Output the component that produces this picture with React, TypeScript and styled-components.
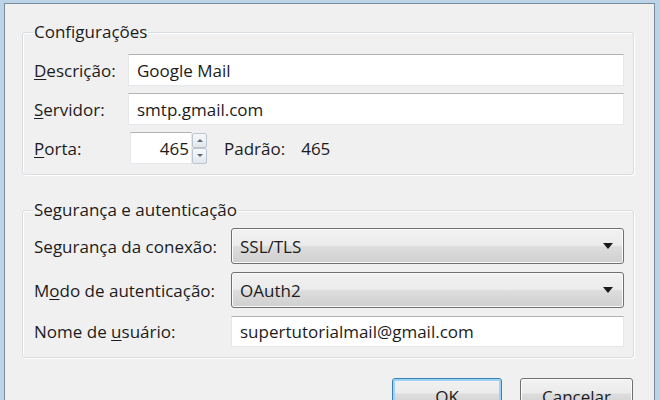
import React from 'react';
import styled, { createGlobalStyle } from 'styled-components';

const GlobalStyle = createGlobalStyle`
  html, body {
    margin: 0;
    padding: 0;
    width: 660px;
    height: 400px;
    overflow: hidden;
    background: #bcd3e8;
  }
  * {
    box-sizing: border-box;
  }
`;

const Window = styled.div`
  margin: 3px 5px 0 4px;
  height: 420px;
  background: #f0f0f0;
  border: 1px solid #7b8b9b;
  border-bottom: none;
  padding: 17px 20px 0 17px;
  font-family: 'Open Sans', 'Noto Sans', sans-serif;
  font-size: 17px;
  color: #1c1c1c;
`;

const Group = styled.fieldset<{ $top: number; $gap: number; $bottom: number }>`
  margin: 0 0 ${(p) => p.$bottom}px 0;
  padding: ${(p) => p.$top}px 9px 10px 11px;
  border: 1px solid #d8dde2;
  border-radius: 3px;
  box-shadow: inset 1px 1px 0 #ffffff, 1px 1px 0 #ffffff;
  display: flex;
  flex-direction: column;
  gap: ${(p) => p.$gap}px;

  legend {
    padding: 0 1px;
    margin-left: -1px;
    line-height: 22px;
  }
`;

const Row = styled.div<{ $label: number }>`
  display: grid;
  grid-template-columns: ${(p) => p.$label}px 1fr;
  align-items: center;
`;

const Key = styled.span`
  text-decoration: underline;
  text-underline-offset: 2px;
`;

const TextBox = styled.div<{ $h: number }>`
  height: ${(p) => p.$h}px;
  background: #ffffff;
  border: 1px solid #e4e8ec;
  border-top-color: #b3b3b3;
  padding: 0 8px;
  display: flex;
  align-items: center;
  white-space: nowrap;
`;

const PortLine = styled.div`
  display: flex;
  align-items: center;
`;

const PortBox = styled(TextBox)`
  width: 62px;
  justify-content: flex-end;
  padding: 0 2px 0 0;
`;

const Spinner = styled.div`
  display: flex;
  flex-direction: column;
  width: 15px;
  height: 31px;
`;

const SpinButton = styled.div<{ $down?: boolean }>`
  flex: 1;
  border: 1px solid #bcc6d2;
  border-radius: 2px;
  background: linear-gradient(#f7f8fa, #e3e7ec);
  display: flex;
  align-items: center;
  justify-content: center;

  &::after {
    content: '';
    border-left: 3px solid transparent;
    border-right: 3px solid transparent;
    ${(p) =>
      p.$down
        ? 'border-top: 3px solid #5a6878;'
        : 'border-bottom: 3px solid #5a6878;'}
  }
`;

const DefaultLabel = styled.span`
  margin-left: 17px;
`;

const DefaultValue = styled.span`
  margin-left: 16px;
`;

const Combo = styled.div<{ $h: number }>`
  height: ${(p) => p.$h}px;
  border: 1px solid #707070;
  border-radius: 3px;
  background: linear-gradient(#f2f2f2 0%, #ebebeb 48%, #dddddd 52%, #cfcfcf 100%);
  box-shadow: inset 0 0 0 1px #fbfbfb;
  display: flex;
  align-items: center;
  justify-content: space-between;
  padding: 0 10px 0 8px;
`;

const Arrow = styled.span`
  border-left: 5px solid transparent;
  border-right: 5px solid transparent;
  border-top: 6px solid #1a1a1a;
`;

const Buttons = styled.div`
  display: flex;
  justify-content: flex-end;
  gap: 18px;
  padding-right: 1px;
`;

const Button = styled.div<{ $default?: boolean; $w: number }>`
  width: ${(p) => p.$w}px;
  height: 31px;
  border: 1px solid ${(p) => (p.$default ? '#3c7fb1' : '#707070')};
  border-radius: 3px;
  background: linear-gradient(#f2f2f2 0%, #ebebeb 48%, #dddddd 52%, #cfcfcf 100%);
  box-shadow: inset 0 0 0 ${(p) => (p.$default ? '2px #9bd4f5' : '1px #fbfbfb')};
  display: flex;
  align-items: center;
  justify-content: center;
  padding-top: 6px;
`;

const App: React.FC = () => {
  return (
    <>
      <GlobalStyle />
      <Window>
        <Group $top={11} $gap={7} $bottom={24}>
          <legend>Configurações</legend>
          <Row $label={94}>
            <span>
              <Key>D</Key>escrição:
            </span>
            <TextBox $h={32}>Google Mail</TextBox>
          </Row>
          <Row $label={94}>
            <span>
              <Key>S</Key>ervidor:
            </span>
            <TextBox $h={32}>smtp.gmail.com</TextBox>
          </Row>
          <Row $label={96}>
            <span>
              <Key>P</Key>orta:
            </span>
            <PortLine>
              <PortBox $h={32}>465</PortBox>
              <Spinner>
                <SpinButton />
                <SpinButton $down />
              </Spinner>
              <DefaultLabel>Padrão:</DefaultLabel>
              <DefaultValue>465</DefaultValue>
            </PortLine>
          </Row>
        </Group>

        <Group $top={7} $gap={8} $bottom={20}>
          <legend>Segurança e autenticação</legend>
          <Row $label={197}>
            <span>
              Se<Key>g</Key>urança da conexão:
            </span>
            <Combo $h={36}>
              SSL/TLS
              <Arrow />
            </Combo>
          </Row>
          <Row $label={197}>
            <span>
              M<Key>o</Key>do de autenticação:
            </span>
            <Combo $h={36}>
              OAuth2
              <Arrow />
            </Combo>
          </Row>
          <Row $label={197}>
            <span>
              Nome de <Key>u</Key>suário:
            </span>
            <TextBox $h={31}>supertutorialmail@gmail.com</TextBox>
          </Row>
        </Group>

        <Buttons>
          <Button $default $w={110}>OK</Button>
          <Button $w={113}>Cancelar</Button>
        </Buttons>
      </Window>
    </>
  );
};

export default App;
